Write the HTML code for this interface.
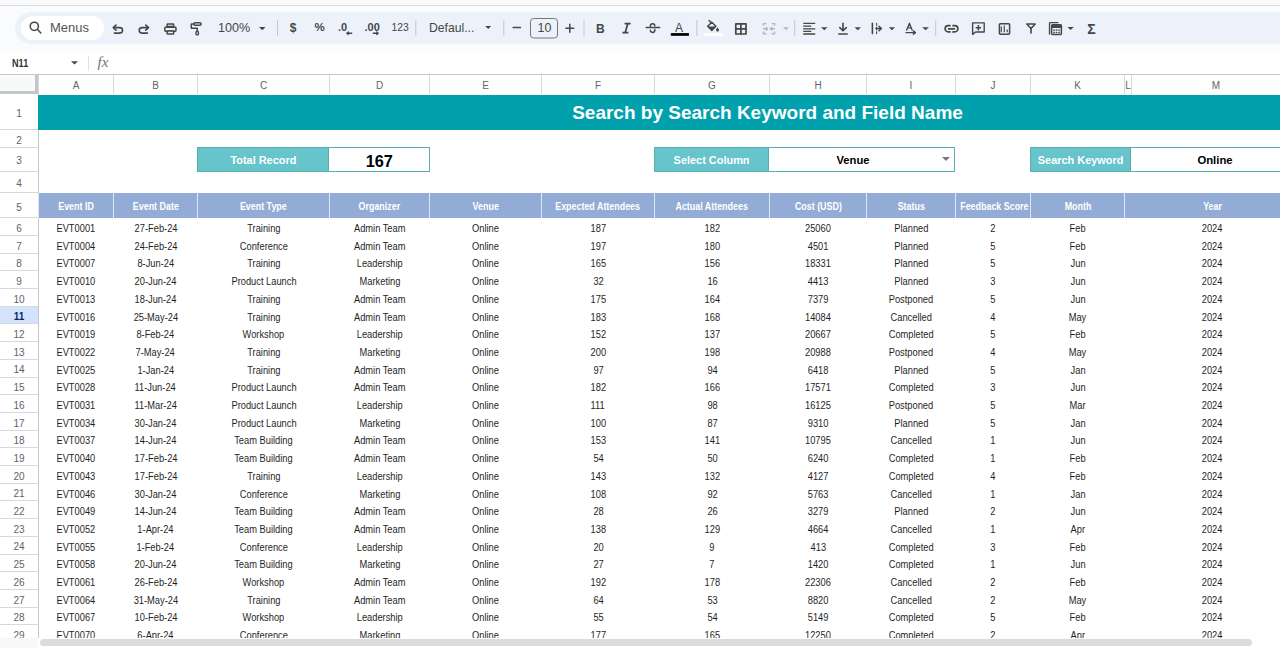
<!DOCTYPE html>
<html><head><meta charset="utf-8">
<style>
*{margin:0;padding:0;box-sizing:border-box}
html,body{width:1280px;height:648px;overflow:hidden;background:#fff;font-family:"Liberation Sans",sans-serif}
.a{position:absolute}
.t{position:absolute;white-space:nowrap;text-align:center}
.ch{position:absolute;top:75px;height:19px;border-left:1px solid #d9d9d9;color:#606368;font-size:10px;line-height:19px;padding-top:1px;text-align:center}
.rh{position:absolute;left:0;width:38px;border-bottom:1px solid #d9d9d9;color:#555;font-size:10px;text-align:center;background:#fff;padding-top:1.5px}
.hd{position:absolute;top:193px;height:25px;background:#92acd5;border-left:1px solid #dde6f3;color:#fff;font-weight:bold;font-size:10px;line-height:25px;padding-top:0.6px;text-align:center;white-space:nowrap}
.dc{position:absolute;font-size:10px;color:#1f1f1f;text-align:center;white-space:nowrap;line-height:17.7px;height:17.7px;padding-top:1.8px}
.dc span,.hd span{display:inline-block;transform:scaleX(.93)}
.hd span{transform:scaleX(.89)}
svg{position:absolute;overflow:visible}
</style></head><body>

<div class="a" style="left:0;top:0;width:1280px;height:5px;background:#f9f8fa"></div>
<div class="a" style="left:0;top:5px;width:1280px;height:1px;background:#dcdcdc"></div>
<div class="a" style="left:0;top:6px;width:1280px;height:45px;background:#f9fbfd"></div>
<div class="a" style="left:15px;top:12px;width:1280px;height:32px;background:#edf2fa;border-radius:16px"></div>
<div class="a" style="left:21px;top:16px;width:83px;height:24px;background:#fff;border-radius:12px"></div>
<div class="t" style="left:50px;top:20px;font-size:13px;color:#555;line-height:16px">Menus</div>
<svg style="left:0;top:0" width="1280" height="51" viewBox="0 0 1280 51">
<g fill="none" stroke="#444746" stroke-width="1.5" stroke-linecap="round" stroke-linejoin="round">
<!-- magnifier -->
<circle cx="34.3" cy="26.3" r="4.1"/>
<path d="M37.3 29.3 L40.8 33"/>
<!-- undo -->
<path d="M113.8 27.6 H119.8 A2.75 2.75 0 0 1 119.8 33.1 H114.4" stroke-width="1.6"/>
<path d="M116 25.1 L113.3 27.6 L116 30.1" stroke-width="1.6"/>
<!-- redo -->
<path d="M148 27.6 H142 A2.75 2.75 0 0 0 142 33.1 H147.4" stroke-width="1.6"/>
<path d="M145.8 25.1 L148.5 27.6 L145.8 30.1" stroke-width="1.6"/>
<!-- print -->
<rect x="167.15" y="24" width="6.5" height="2.6" rx="0.5"/>
<rect x="164.85" y="27.35" width="11.1" height="3.8" rx="0.7"/>
<rect x="167.15" y="30.95" width="6.5" height="3" rx="0.5" fill="#edf2fa"/>
<!-- paint format -->
<rect x="193.95" y="22.85" width="7.1" height="2.3" rx="1.1"/>
<path d="M193.9 24 H191.3 V28.3 H197.3 V30.8"/>
<path d="M197.2 30.9 C196.2 31.5 195.85 32.5 195.85 33.6 A1.35 1.35 0 0 0 198.55 33.6 C198.55 32.5 198.2 31.5 197.2 30.9 Z" stroke-width="1.4"/>
<!-- minus/plus -->
<path d="M513.2 27.6 H520.4"/>
<path d="M565.8 28.2 H573.8 M569.8 24.2 V32.2"/>
<!-- italic -->
<path d="M624.6 23.7 H630.6 M622.4 32.6 H628.4 M627.8 23.7 L625.2 32.6" stroke-width="1.7" stroke-linecap="butt"/>
<!-- strikethrough -->
<path d="M646.2 27.6 H659.6" stroke-width="1.5"/>
<path d="M650.4 26.2 V26.1 A2.2 2.2 0 0 1 654.8 25.8" stroke-width="1.5"/>
<path d="M650.4 30.2 A2.2 2.2 0 0 0 654.8 30.2 V29.6" stroke-width="1.5"/>
<!-- borders -->
<rect x="735.8" y="23.8" width="10.2" height="10.2" stroke-width="1.7"/>
<path d="M740.9 23.8 V34 M735.8 28.9 H746" stroke-width="1.7"/>
<!-- align left -->
<path d="M803.2 23.4 H815.2 M803.2 26.2 H811.2 M803.2 28.9 H815.2 M803.2 31.4 H811.2 M803.2 34 H815.2" stroke-width="1.3" stroke-linecap="butt"/>
<!-- valign bottom -->
<path d="M843 23.2 V30.4 M839.8 27.6 L843 30.8 L846.2 27.6" stroke-width="1.6"/>
<path d="M838.2 34 H847.8" stroke-width="1.5" stroke-linecap="butt"/>
<!-- wrap -->
<path d="M872.4 23.2 V33.6" stroke-width="1.6"/>
<path d="M876.6 23.4 V25.2 M876.6 27 V30 M876.6 31.8 V33.6" stroke-width="1.1"/>
<path d="M876 28.5 H881.2 M879 26.2 L881.4 28.5 L879 30.8" stroke-width="1.5"/>
<!-- rotate A -->
<path d="M906.6 30.2 L909.4 23.2 L912.2 30.2 M907.6 27.8 H911.2" stroke-width="1.3"/>
<path d="M906 32.6 H915.2 M913.4 30.9 L915.4 32.6 L913.4 34.3" stroke-width="1.4"/>
<!-- link -->
<path d="M950 25.7 H948.2 A3.1 3.1 0 0 0 948.2 31.9 H950 M953 25.7 H954.8 A3.1 3.1 0 0 1 954.8 31.9 H953 M948.6 28.8 H954.4" stroke-width="1.7"/>
<!-- comment -->
<path d="M972.6 34.4 V22.9 H984.2 V32 H975.6 Z" stroke-width="1.4"/>
<path d="M978.4 25 V30.4 M975.7 27.7 H981.1" stroke-width="1.5" stroke-linecap="butt"/>
<!-- chart -->
<rect x="999.4" y="23.8" width="10.2" height="10.4" rx="1" stroke-width="1.5"/>
<path d="M1001.3 32.2 V26.6 M1004.3 32.2 V25.6 M1007.2 32.2 V29.6" stroke-width="1.2" stroke-linecap="butt"/>
<!-- filter -->
<path d="M1026.8 24 H1035.2 L1031 28.4 Z" stroke-width="1.5"/>
<path d="M1031 28.4 V33" stroke-width="1.6"/>
<!-- calc -->
<path d="M1049.5 34.2 V23.4 A0.8 0.8 0 0 1 1050.3 22.6 H1058" stroke-width="1.3"/>
<rect x="1051.6" y="24.8" width="9.8" height="9.8" rx="1" stroke-width="1.5"/>
</g>
<g fill="#444746">
<!-- dropdown triangles -->
<path d="M259 27 L265.5 27 L262.25 30.2 Z"/>
<path d="M485.2 26 L491.2 26 L488.2 29 Z"/>
<path d="M821 27.2 L827.6 27.2 L824.3 30.3 Z"/>
<path d="M854.6 27.2 L861 27.2 L857.8 30.3 Z"/>
<path d="M888.8 27.2 L895 27.2 L891.9 30.3 Z"/>
<path d="M922.2 27.2 L928.9 27.2 L925.55 30.3 Z"/>
<path d="M1067.5 27 L1073.8 27 L1070.65 30.1 Z"/>
<path d="M71 61.3 L78 61.3 L74.5 64.6 Z"/>
<!-- . 0 arrows -->
<path d="M345.8 33.2 L348.8 30.9 V32.5 H352.2 V33.9 H348.8 V35.5 Z"/>
<path d="M379.2 33.2 L376.2 30.9 V32.5 H372.8 V33.9 H376.2 V35.5 Z"/>
<!-- paint bucket -->
<path d="M711.8 22.2 L715.9 26.3 L711.8 30.4 L707.7 26.3 Z" fill="none" stroke="#444746" stroke-width="1.5" stroke-linejoin="round"/>
<path d="M707.9 26.5 H715.7 L711.8 30.3 Z"/>
<path d="M709 20.4 L711.4 22.8" stroke="#444746" stroke-width="1.4" stroke-linecap="round"/>
<path d="M717.5 27.4 C718.4 28.5 719 29.2 719 29.9 A1.5 1.5 0 0 1 716 29.9 C716 29.2 716.6 28.5 717.5 27.4 Z"/>
<!-- calc grid dots -->
<rect x="1051.6" y="24.8" width="9.8" height="3.2"/>
<rect x="1053.2" y="29.4" width="1.6" height="1.4"/><rect x="1055.7" y="29.4" width="1.6" height="1.4"/><rect x="1058.2" y="29.4" width="1.6" height="1.4"/>
<rect x="1053.2" y="31.8" width="1.6" height="1.4"/><rect x="1055.7" y="31.8" width="1.6" height="1.4"/><rect x="1058.2" y="31.8" width="1.6" height="1.4"/>
</g>
<!-- A color bar -->
<rect x="670.8" y="33.1" width="18.2" height="2.7" fill="#000"/>
<rect x="703.7" y="33.3" width="19.3" height="2.5" fill="#fff"/>
<!-- merge (disabled) -->
<g fill="none" stroke="#b5b8bc" stroke-width="1.4">
<path d="M763.4 25.8 V23.6 H766.4 M763.4 31.6 V33.8 H766.4 M774.6 25.8 V23.6 H771.6 M774.6 31.6 V33.8 H771.6"/>
<path d="M763 28.7 H767.6 M765.8 26.9 L767.6 28.7 L765.8 30.5 M775 28.7 H770.4 M772.2 26.9 L770.4 28.7 L772.2 30.5"/>
</g>
<path d="M783 27.2 L789 27.2 L786 30.2 Z" fill="#b5b8bc"/>
<!-- separators -->
<g fill="#c7c7c7">
<rect x="277" y="20.2" width="1" height="15.8"/>
<rect x="415.3" y="20.2" width="1" height="15.8"/>
<rect x="503.3" y="20.2" width="1" height="15.8"/>
<rect x="583.5" y="20.2" width="1" height="15.8"/>
<rect x="696.3" y="20.2" width="1" height="15.8"/>
<rect x="794.2" y="20.2" width="1" height="15.8"/>
<rect x="935.2" y="20.2" width="1" height="15.8"/>
</g>
<!-- font size box -->
<rect x="530.5" y="18.5" width="27" height="19.5" rx="3" fill="none" stroke="#747775" stroke-width="1"/>
</svg>

<div class="t" style="left:218px;top:21.3px;font-size:12.6px;font-weight:normal;font-style:normal;color:#444746;font-family:"Liberation Sans",sans-serif;line-height:14.6px;letter-spacing:0px;text-align:left">100%</div>
<div class="t" style="left:289.8px;top:20.5px;font-size:12px;font-weight:600;font-style:normal;color:#444746;font-family:"Liberation Sans",sans-serif;line-height:14px;letter-spacing:0px;text-align:left">$</div>
<div class="t" style="left:314.5px;top:20.5px;font-size:11.5px;font-weight:bold;font-style:normal;color:#444746;font-family:"Liberation Sans",sans-serif;line-height:13.5px;letter-spacing:0px;text-align:left">%</div>
<div class="t" style="left:338px;top:20.5px;font-size:11px;font-weight:bold;font-style:normal;color:#444746;font-family:"Liberation Sans",sans-serif;line-height:13px;letter-spacing:0px;text-align:left">.0</div>
<div class="t" style="left:364.5px;top:20.5px;font-size:11px;font-weight:bold;font-style:normal;color:#444746;font-family:"Liberation Sans",sans-serif;line-height:13px;letter-spacing:0px;text-align:left">.00</div>
<div class="t" style="left:391.5px;top:22px;font-size:10.3px;font-weight:normal;font-style:normal;color:#444746;font-family:"Liberation Sans",sans-serif;line-height:12.3px;letter-spacing:0px;text-align:left">123</div>
<div class="t" style="left:429px;top:21px;font-size:12.2px;font-weight:normal;font-style:normal;color:#444746;font-family:"Liberation Sans",sans-serif;line-height:14.2px;letter-spacing:0px;text-align:left">Defaul...</div>
<div class="t" style="left:537.5px;top:21px;font-size:12.5px;font-weight:normal;font-style:normal;color:#444746;font-family:"Liberation Sans",sans-serif;line-height:14.5px;letter-spacing:0px;text-align:left">10</div>
<div class="t" style="left:596px;top:21.5px;font-size:12px;font-weight:bold;font-style:normal;color:#444746;font-family:"Liberation Sans",sans-serif;line-height:14px;letter-spacing:0px;text-align:left">B</div>
<div class="t" style="left:675px;top:20.5px;font-size:12px;font-weight:normal;font-style:normal;color:#444746;font-family:"Liberation Sans",sans-serif;line-height:14px;letter-spacing:0px;text-align:left">A</div>
<div class="t" style="left:1087.3px;top:20.6px;font-size:14px;font-weight:bold;font-style:normal;color:#444746;font-family:"Liberation Sans",sans-serif;line-height:16px;letter-spacing:0px;text-align:left">&Sigma;</div>
<div class="a" style="left:0;top:51px;width:1280px;height:23px;background:#fff"></div>
<div class="t" style="left:11.6px;top:56.5px;font-size:10.6px;font-weight:bold;color:#333;line-height:12px;transform:scaleX(.86);transform-origin:0 0">N11</div>
<svg style="left:0;top:0" width="100" height="80"><path d="M71 61.3 L78 61.3 L74.5 64.6 Z" fill="#444746"/></svg>
<div class="a" style="left:88px;top:56px;width:1px;height:15px;background:#e0e0e0"></div>
<div class="t" style="left:97.5px;top:54.5px;font-size:15px;color:#6f7378;font-family:'Liberation Serif',serif;font-style:italic;line-height:14px">fx</div>
<div class="a" style="left:0;top:74px;width:1280px;height:1px;background:#c7c7c7"></div>
<div class="a" style="left:0;top:75px;width:1280px;height:19px;background:#fff"></div>
<div class="a" style="left:0;top:75px;width:38px;height:19px;background:#f8f9fa;border-right:3px solid #c4c7c5;border-bottom:3px solid #c4c7c5"></div>
<div class="ch" style="left:38px;width:75px">A</div>
<div class="ch" style="left:113px;width:84px">B</div>
<div class="ch" style="left:197px;width:132px">C</div>
<div class="ch" style="left:329px;width:100px">D</div>
<div class="ch" style="left:429px;width:112px">E</div>
<div class="ch" style="left:541px;width:113px">F</div>
<div class="ch" style="left:654px;width:115px">G</div>
<div class="ch" style="left:769px;width:97px">H</div>
<div class="ch" style="left:866px;width:89px">I</div>
<div class="ch" style="left:955px;width:75px">J</div>
<div class="ch" style="left:1030px;width:94px">K</div>
<div class="ch" style="left:1124px;width:7px">L</div>
<div class="ch" style="left:1131px;width:169px">M</div>
<div class="rh" style="top:94px;height:36px;line-height:36px;background:#fff;color:#606368;font-weight:normal;padding-top:-0.5px">1</div>
<div class="rh" style="top:130px;height:17.5px;line-height:17.5px;background:#fff;color:#606368;font-weight:normal;padding-top:-0.5px">2</div>
<div class="rh" style="top:147.5px;height:24.0px;line-height:24.0px;background:#fff;color:#606368;font-weight:normal;padding-top:-0.5px">3</div>
<div class="rh" style="top:171.5px;height:21.5px;line-height:21.5px;background:#fff;color:#606368;font-weight:normal;padding-top:-0.5px">4</div>
<div class="rh" style="top:193px;height:25.30000000000001px;line-height:25.30000000000001px;background:#fff;color:#606368;font-weight:normal;padding-top:-0.5px">5</div>
<div class="rh" style="top:218.3px;height:17.69999999999999px;line-height:17.69999999999999px;background:#fff;color:#606368;font-weight:normal;padding-top:1.5px">6</div>
<div class="rh" style="top:236.0px;height:17.700000000000017px;line-height:17.700000000000017px;background:#fff;color:#606368;font-weight:normal;padding-top:1.5px">7</div>
<div class="rh" style="top:253.70000000000002px;height:17.69999999999996px;line-height:17.69999999999996px;background:#fff;color:#606368;font-weight:normal;padding-top:1.5px">8</div>
<div class="rh" style="top:271.4px;height:17.700000000000045px;line-height:17.700000000000045px;background:#fff;color:#606368;font-weight:normal;padding-top:1.5px">9</div>
<div class="rh" style="top:289.1px;height:17.69999999999999px;line-height:17.69999999999999px;background:#fff;color:#606368;font-weight:normal;padding-top:1.5px">10</div>
<div class="rh" style="top:306.8px;height:17.69999999999999px;line-height:17.69999999999999px;background:#d3e3fd;color:#0b2a5c;font-weight:bold;padding-top:1.5px">11</div>
<div class="rh" style="top:324.5px;height:17.69999999999999px;line-height:17.69999999999999px;background:#fff;color:#606368;font-weight:normal;padding-top:1.5px">12</div>
<div class="rh" style="top:342.2px;height:17.69999999999999px;line-height:17.69999999999999px;background:#fff;color:#606368;font-weight:normal;padding-top:1.5px">13</div>
<div class="rh" style="top:359.9px;height:17.700000000000045px;line-height:17.700000000000045px;background:#fff;color:#606368;font-weight:normal;padding-top:1.5px">14</div>
<div class="rh" style="top:377.6px;height:17.69999999999999px;line-height:17.69999999999999px;background:#fff;color:#606368;font-weight:normal;padding-top:1.5px">15</div>
<div class="rh" style="top:395.3px;height:17.69999999999999px;line-height:17.69999999999999px;background:#fff;color:#606368;font-weight:normal;padding-top:1.5px">16</div>
<div class="rh" style="top:413.0px;height:17.69999999999999px;line-height:17.69999999999999px;background:#fff;color:#606368;font-weight:normal;padding-top:1.5px">17</div>
<div class="rh" style="top:430.7px;height:17.69999999999999px;line-height:17.69999999999999px;background:#fff;color:#606368;font-weight:normal;padding-top:1.5px">18</div>
<div class="rh" style="top:448.4px;height:17.700000000000045px;line-height:17.700000000000045px;background:#fff;color:#606368;font-weight:normal;padding-top:1.5px">19</div>
<div class="rh" style="top:466.1px;height:17.69999999999999px;line-height:17.69999999999999px;background:#fff;color:#606368;font-weight:normal;padding-top:1.5px">20</div>
<div class="rh" style="top:483.8px;height:17.69999999999999px;line-height:17.69999999999999px;background:#fff;color:#606368;font-weight:normal;padding-top:1.5px">21</div>
<div class="rh" style="top:501.5px;height:17.700000000000045px;line-height:17.700000000000045px;background:#fff;color:#606368;font-weight:normal;padding-top:1.5px">22</div>
<div class="rh" style="top:519.2px;height:17.699999999999932px;line-height:17.699999999999932px;background:#fff;color:#606368;font-weight:normal;padding-top:1.5px">23</div>
<div class="rh" style="top:536.9px;height:17.700000000000045px;line-height:17.700000000000045px;background:#fff;color:#606368;font-weight:normal;padding-top:1.5px">24</div>
<div class="rh" style="top:554.6px;height:17.699999999999932px;line-height:17.699999999999932px;background:#fff;color:#606368;font-weight:normal;padding-top:1.5px">25</div>
<div class="rh" style="top:572.3px;height:17.700000000000045px;line-height:17.700000000000045px;background:#fff;color:#606368;font-weight:normal;padding-top:1.5px">26</div>
<div class="rh" style="top:590.0px;height:17.700000000000045px;line-height:17.700000000000045px;background:#fff;color:#606368;font-weight:normal;padding-top:1.5px">27</div>
<div class="rh" style="top:607.7px;height:17.699999999999932px;line-height:17.699999999999932px;background:#fff;color:#606368;font-weight:normal;padding-top:1.5px">28</div>
<div class="rh" style="top:625.4px;height:17.699999999999932px;line-height:17.699999999999932px;background:#fff;color:#606368;font-weight:normal;padding-top:1.5px">29</div>
<div class="a" style="left:38px;top:94px;width:1px;height:544px;background:#c7c7c7"></div>
<div class="a" style="left:38px;top:95px;width:1242px;height:35px;background:#00a1ad"></div>
<div class="t" style="left:572px;top:102px;width:391px;font-size:19px;font-weight:bold;color:#fff;line-height:22px">Search by Search Keyword and Field Name</div>
<div class="a" style="left:197px;top:147px;width:132px;height:25px;background:#66c4ca;border:1px solid #5aaeb3"></div><div class="t" style="left:197px;top:147px;width:132px;height:25px;line-height:25px;font-size:11.4px;font-weight:bold;color:#fff;padding-top:0.5px"><span style="display:inline-block;transform:scaleX(.96)">Total Record</span></div><div class="a" style="left:329px;top:147px;width:100.5px;height:25px;background:#fff;border:1px solid #5aaeb3;border-left:none"></div><div class="t" style="left:329px;top:147px;width:100.5px;height:25px;line-height:25px;font-size:16.3px;font-weight:bold;color:#000;padding-top:1.5px">167</div>
<div class="a" style="left:654px;top:147px;width:115px;height:25px;background:#66c4ca;border:1px solid #5aaeb3"></div><div class="t" style="left:654px;top:147px;width:115px;height:25px;line-height:25px;font-size:11.4px;font-weight:bold;color:#fff;padding-top:0.5px"><span style="display:inline-block;transform:scaleX(.96)">Select Column</span></div><div class="a" style="left:769px;top:147px;width:186px;height:25px;background:#fff;border:1px solid #5aaeb3;border-left:none"></div><div class="t" style="left:769px;top:147px;width:168px;height:25px;line-height:25px;font-size:11.2px;font-weight:bold;color:#000;padding-top:0.5px">Venue</div>
<div class="a" style="left:942px;top:157px;width:0;height:0;border-left:4px solid transparent;border-right:4px solid transparent;border-top:4px solid #777"></div>
<div class="a" style="left:1030px;top:147px;width:101px;height:25px;background:#66c4ca;border:1px solid #5aaeb3"></div><div class="t" style="left:1030px;top:147px;width:101px;height:25px;line-height:25px;font-size:11.4px;font-weight:bold;color:#fff;padding-top:0.5px"><span style="display:inline-block;transform:scaleX(.96)">Search Keyword</span></div><div class="a" style="left:1131px;top:147px;width:168px;height:25px;background:#fff;border:1px solid #5aaeb3;border-left:none"></div><div class="t" style="left:1131px;top:147px;width:168px;height:25px;line-height:25px;font-size:11.3px;font-weight:bold;color:#000;padding-top:0.5px">Online</div>
<div class="hd" style="left:38px;width:75px"><span>Event ID</span></div>
<div class="hd" style="left:113px;width:84px"><span>Event Date</span></div>
<div class="hd" style="left:197px;width:132px"><span>Event Type</span></div>
<div class="hd" style="left:329px;width:100px"><span>Organizer</span></div>
<div class="hd" style="left:429px;width:112px"><span>Venue</span></div>
<div class="hd" style="left:541px;width:113px"><span>Expected Attendees</span></div>
<div class="hd" style="left:654px;width:115px"><span>Actual Attendees</span></div>
<div class="hd" style="left:769px;width:97px"><span>Cost (USD)</span></div>
<div class="hd" style="left:866px;width:89px"><span>Status</span></div>
<div class="hd" style="left:955px;width:75px"><span>Feedback Score</span></div>
<div class="hd" style="left:1030px;width:94px"><span>Month</span></div>
<div class="hd" style="left:1124px;width:176px"><span>Year</span></div>
<div class="dc" style="left:38.6px;top:218.3px;width:75px"><span>EVT0001</span></div>
<div class="dc" style="left:113.6px;top:218.3px;width:84px"><span>27-Feb-24</span></div>
<div class="dc" style="left:197.6px;top:218.3px;width:132px"><span>Training</span></div>
<div class="dc" style="left:329.6px;top:218.3px;width:100px"><span>Admin Team</span></div>
<div class="dc" style="left:429.6px;top:218.3px;width:112px"><span>Online</span></div>
<div class="dc" style="left:541.6px;top:218.3px;width:113px"><span>187</span></div>
<div class="dc" style="left:654.6px;top:218.3px;width:115px"><span>182</span></div>
<div class="dc" style="left:769.6px;top:218.3px;width:97px"><span>25060</span></div>
<div class="dc" style="left:866.6px;top:218.3px;width:89px"><span>Planned</span></div>
<div class="dc" style="left:955.6px;top:218.3px;width:75px"><span>2</span></div>
<div class="dc" style="left:1030.6px;top:218.3px;width:94px"><span>Feb</span></div>
<div class="dc" style="left:1124.6px;top:218.3px;width:176px"><span>2024</span></div>
<div class="dc" style="left:38.6px;top:236.0px;width:75px"><span>EVT0004</span></div>
<div class="dc" style="left:113.6px;top:236.0px;width:84px"><span>24-Feb-24</span></div>
<div class="dc" style="left:197.6px;top:236.0px;width:132px"><span>Conference</span></div>
<div class="dc" style="left:329.6px;top:236.0px;width:100px"><span>Admin Team</span></div>
<div class="dc" style="left:429.6px;top:236.0px;width:112px"><span>Online</span></div>
<div class="dc" style="left:541.6px;top:236.0px;width:113px"><span>197</span></div>
<div class="dc" style="left:654.6px;top:236.0px;width:115px"><span>180</span></div>
<div class="dc" style="left:769.6px;top:236.0px;width:97px"><span>4501</span></div>
<div class="dc" style="left:866.6px;top:236.0px;width:89px"><span>Planned</span></div>
<div class="dc" style="left:955.6px;top:236.0px;width:75px"><span>5</span></div>
<div class="dc" style="left:1030.6px;top:236.0px;width:94px"><span>Feb</span></div>
<div class="dc" style="left:1124.6px;top:236.0px;width:176px"><span>2024</span></div>
<div class="dc" style="left:38.6px;top:253.7px;width:75px"><span>EVT0007</span></div>
<div class="dc" style="left:113.6px;top:253.7px;width:84px"><span>8-Jun-24</span></div>
<div class="dc" style="left:197.6px;top:253.7px;width:132px"><span>Training</span></div>
<div class="dc" style="left:329.6px;top:253.7px;width:100px"><span>Leadership</span></div>
<div class="dc" style="left:429.6px;top:253.7px;width:112px"><span>Online</span></div>
<div class="dc" style="left:541.6px;top:253.7px;width:113px"><span>165</span></div>
<div class="dc" style="left:654.6px;top:253.7px;width:115px"><span>156</span></div>
<div class="dc" style="left:769.6px;top:253.7px;width:97px"><span>18331</span></div>
<div class="dc" style="left:866.6px;top:253.7px;width:89px"><span>Planned</span></div>
<div class="dc" style="left:955.6px;top:253.7px;width:75px"><span>5</span></div>
<div class="dc" style="left:1030.6px;top:253.7px;width:94px"><span>Jun</span></div>
<div class="dc" style="left:1124.6px;top:253.7px;width:176px"><span>2024</span></div>
<div class="dc" style="left:38.6px;top:271.4px;width:75px"><span>EVT0010</span></div>
<div class="dc" style="left:113.6px;top:271.4px;width:84px"><span>20-Jun-24</span></div>
<div class="dc" style="left:197.6px;top:271.4px;width:132px"><span>Product Launch</span></div>
<div class="dc" style="left:329.6px;top:271.4px;width:100px"><span>Marketing</span></div>
<div class="dc" style="left:429.6px;top:271.4px;width:112px"><span>Online</span></div>
<div class="dc" style="left:541.6px;top:271.4px;width:113px"><span>32</span></div>
<div class="dc" style="left:654.6px;top:271.4px;width:115px"><span>16</span></div>
<div class="dc" style="left:769.6px;top:271.4px;width:97px"><span>4413</span></div>
<div class="dc" style="left:866.6px;top:271.4px;width:89px"><span>Planned</span></div>
<div class="dc" style="left:955.6px;top:271.4px;width:75px"><span>3</span></div>
<div class="dc" style="left:1030.6px;top:271.4px;width:94px"><span>Jun</span></div>
<div class="dc" style="left:1124.6px;top:271.4px;width:176px"><span>2024</span></div>
<div class="dc" style="left:38.6px;top:289.1px;width:75px"><span>EVT0013</span></div>
<div class="dc" style="left:113.6px;top:289.1px;width:84px"><span>18-Jun-24</span></div>
<div class="dc" style="left:197.6px;top:289.1px;width:132px"><span>Training</span></div>
<div class="dc" style="left:329.6px;top:289.1px;width:100px"><span>Admin Team</span></div>
<div class="dc" style="left:429.6px;top:289.1px;width:112px"><span>Online</span></div>
<div class="dc" style="left:541.6px;top:289.1px;width:113px"><span>175</span></div>
<div class="dc" style="left:654.6px;top:289.1px;width:115px"><span>164</span></div>
<div class="dc" style="left:769.6px;top:289.1px;width:97px"><span>7379</span></div>
<div class="dc" style="left:866.6px;top:289.1px;width:89px"><span>Postponed</span></div>
<div class="dc" style="left:955.6px;top:289.1px;width:75px"><span>5</span></div>
<div class="dc" style="left:1030.6px;top:289.1px;width:94px"><span>Jun</span></div>
<div class="dc" style="left:1124.6px;top:289.1px;width:176px"><span>2024</span></div>
<div class="dc" style="left:38.6px;top:306.8px;width:75px"><span>EVT0016</span></div>
<div class="dc" style="left:113.6px;top:306.8px;width:84px"><span>25-May-24</span></div>
<div class="dc" style="left:197.6px;top:306.8px;width:132px"><span>Training</span></div>
<div class="dc" style="left:329.6px;top:306.8px;width:100px"><span>Admin Team</span></div>
<div class="dc" style="left:429.6px;top:306.8px;width:112px"><span>Online</span></div>
<div class="dc" style="left:541.6px;top:306.8px;width:113px"><span>183</span></div>
<div class="dc" style="left:654.6px;top:306.8px;width:115px"><span>168</span></div>
<div class="dc" style="left:769.6px;top:306.8px;width:97px"><span>14084</span></div>
<div class="dc" style="left:866.6px;top:306.8px;width:89px"><span>Cancelled</span></div>
<div class="dc" style="left:955.6px;top:306.8px;width:75px"><span>4</span></div>
<div class="dc" style="left:1030.6px;top:306.8px;width:94px"><span>May</span></div>
<div class="dc" style="left:1124.6px;top:306.8px;width:176px"><span>2024</span></div>
<div class="dc" style="left:38.6px;top:324.5px;width:75px"><span>EVT0019</span></div>
<div class="dc" style="left:113.6px;top:324.5px;width:84px"><span>8-Feb-24</span></div>
<div class="dc" style="left:197.6px;top:324.5px;width:132px"><span>Workshop</span></div>
<div class="dc" style="left:329.6px;top:324.5px;width:100px"><span>Leadership</span></div>
<div class="dc" style="left:429.6px;top:324.5px;width:112px"><span>Online</span></div>
<div class="dc" style="left:541.6px;top:324.5px;width:113px"><span>152</span></div>
<div class="dc" style="left:654.6px;top:324.5px;width:115px"><span>137</span></div>
<div class="dc" style="left:769.6px;top:324.5px;width:97px"><span>20667</span></div>
<div class="dc" style="left:866.6px;top:324.5px;width:89px"><span>Completed</span></div>
<div class="dc" style="left:955.6px;top:324.5px;width:75px"><span>5</span></div>
<div class="dc" style="left:1030.6px;top:324.5px;width:94px"><span>Feb</span></div>
<div class="dc" style="left:1124.6px;top:324.5px;width:176px"><span>2024</span></div>
<div class="dc" style="left:38.6px;top:342.2px;width:75px"><span>EVT0022</span></div>
<div class="dc" style="left:113.6px;top:342.2px;width:84px"><span>7-May-24</span></div>
<div class="dc" style="left:197.6px;top:342.2px;width:132px"><span>Training</span></div>
<div class="dc" style="left:329.6px;top:342.2px;width:100px"><span>Marketing</span></div>
<div class="dc" style="left:429.6px;top:342.2px;width:112px"><span>Online</span></div>
<div class="dc" style="left:541.6px;top:342.2px;width:113px"><span>200</span></div>
<div class="dc" style="left:654.6px;top:342.2px;width:115px"><span>198</span></div>
<div class="dc" style="left:769.6px;top:342.2px;width:97px"><span>20988</span></div>
<div class="dc" style="left:866.6px;top:342.2px;width:89px"><span>Postponed</span></div>
<div class="dc" style="left:955.6px;top:342.2px;width:75px"><span>4</span></div>
<div class="dc" style="left:1030.6px;top:342.2px;width:94px"><span>May</span></div>
<div class="dc" style="left:1124.6px;top:342.2px;width:176px"><span>2024</span></div>
<div class="dc" style="left:38.6px;top:359.9px;width:75px"><span>EVT0025</span></div>
<div class="dc" style="left:113.6px;top:359.9px;width:84px"><span>1-Jan-24</span></div>
<div class="dc" style="left:197.6px;top:359.9px;width:132px"><span>Training</span></div>
<div class="dc" style="left:329.6px;top:359.9px;width:100px"><span>Admin Team</span></div>
<div class="dc" style="left:429.6px;top:359.9px;width:112px"><span>Online</span></div>
<div class="dc" style="left:541.6px;top:359.9px;width:113px"><span>97</span></div>
<div class="dc" style="left:654.6px;top:359.9px;width:115px"><span>94</span></div>
<div class="dc" style="left:769.6px;top:359.9px;width:97px"><span>6418</span></div>
<div class="dc" style="left:866.6px;top:359.9px;width:89px"><span>Planned</span></div>
<div class="dc" style="left:955.6px;top:359.9px;width:75px"><span>5</span></div>
<div class="dc" style="left:1030.6px;top:359.9px;width:94px"><span>Jan</span></div>
<div class="dc" style="left:1124.6px;top:359.9px;width:176px"><span>2024</span></div>
<div class="dc" style="left:38.6px;top:377.6px;width:75px"><span>EVT0028</span></div>
<div class="dc" style="left:113.6px;top:377.6px;width:84px"><span>11-Jun-24</span></div>
<div class="dc" style="left:197.6px;top:377.6px;width:132px"><span>Product Launch</span></div>
<div class="dc" style="left:329.6px;top:377.6px;width:100px"><span>Admin Team</span></div>
<div class="dc" style="left:429.6px;top:377.6px;width:112px"><span>Online</span></div>
<div class="dc" style="left:541.6px;top:377.6px;width:113px"><span>182</span></div>
<div class="dc" style="left:654.6px;top:377.6px;width:115px"><span>166</span></div>
<div class="dc" style="left:769.6px;top:377.6px;width:97px"><span>17571</span></div>
<div class="dc" style="left:866.6px;top:377.6px;width:89px"><span>Completed</span></div>
<div class="dc" style="left:955.6px;top:377.6px;width:75px"><span>3</span></div>
<div class="dc" style="left:1030.6px;top:377.6px;width:94px"><span>Jun</span></div>
<div class="dc" style="left:1124.6px;top:377.6px;width:176px"><span>2024</span></div>
<div class="dc" style="left:38.6px;top:395.3px;width:75px"><span>EVT0031</span></div>
<div class="dc" style="left:113.6px;top:395.3px;width:84px"><span>11-Mar-24</span></div>
<div class="dc" style="left:197.6px;top:395.3px;width:132px"><span>Product Launch</span></div>
<div class="dc" style="left:329.6px;top:395.3px;width:100px"><span>Leadership</span></div>
<div class="dc" style="left:429.6px;top:395.3px;width:112px"><span>Online</span></div>
<div class="dc" style="left:541.6px;top:395.3px;width:113px"><span>111</span></div>
<div class="dc" style="left:654.6px;top:395.3px;width:115px"><span>98</span></div>
<div class="dc" style="left:769.6px;top:395.3px;width:97px"><span>16125</span></div>
<div class="dc" style="left:866.6px;top:395.3px;width:89px"><span>Postponed</span></div>
<div class="dc" style="left:955.6px;top:395.3px;width:75px"><span>5</span></div>
<div class="dc" style="left:1030.6px;top:395.3px;width:94px"><span>Mar</span></div>
<div class="dc" style="left:1124.6px;top:395.3px;width:176px"><span>2024</span></div>
<div class="dc" style="left:38.6px;top:413.0px;width:75px"><span>EVT0034</span></div>
<div class="dc" style="left:113.6px;top:413.0px;width:84px"><span>30-Jan-24</span></div>
<div class="dc" style="left:197.6px;top:413.0px;width:132px"><span>Product Launch</span></div>
<div class="dc" style="left:329.6px;top:413.0px;width:100px"><span>Marketing</span></div>
<div class="dc" style="left:429.6px;top:413.0px;width:112px"><span>Online</span></div>
<div class="dc" style="left:541.6px;top:413.0px;width:113px"><span>100</span></div>
<div class="dc" style="left:654.6px;top:413.0px;width:115px"><span>87</span></div>
<div class="dc" style="left:769.6px;top:413.0px;width:97px"><span>9310</span></div>
<div class="dc" style="left:866.6px;top:413.0px;width:89px"><span>Planned</span></div>
<div class="dc" style="left:955.6px;top:413.0px;width:75px"><span>5</span></div>
<div class="dc" style="left:1030.6px;top:413.0px;width:94px"><span>Jan</span></div>
<div class="dc" style="left:1124.6px;top:413.0px;width:176px"><span>2024</span></div>
<div class="dc" style="left:38.6px;top:430.7px;width:75px"><span>EVT0037</span></div>
<div class="dc" style="left:113.6px;top:430.7px;width:84px"><span>14-Jun-24</span></div>
<div class="dc" style="left:197.6px;top:430.7px;width:132px"><span>Team Building</span></div>
<div class="dc" style="left:329.6px;top:430.7px;width:100px"><span>Admin Team</span></div>
<div class="dc" style="left:429.6px;top:430.7px;width:112px"><span>Online</span></div>
<div class="dc" style="left:541.6px;top:430.7px;width:113px"><span>153</span></div>
<div class="dc" style="left:654.6px;top:430.7px;width:115px"><span>141</span></div>
<div class="dc" style="left:769.6px;top:430.7px;width:97px"><span>10795</span></div>
<div class="dc" style="left:866.6px;top:430.7px;width:89px"><span>Cancelled</span></div>
<div class="dc" style="left:955.6px;top:430.7px;width:75px"><span>1</span></div>
<div class="dc" style="left:1030.6px;top:430.7px;width:94px"><span>Jun</span></div>
<div class="dc" style="left:1124.6px;top:430.7px;width:176px"><span>2024</span></div>
<div class="dc" style="left:38.6px;top:448.4px;width:75px"><span>EVT0040</span></div>
<div class="dc" style="left:113.6px;top:448.4px;width:84px"><span>17-Feb-24</span></div>
<div class="dc" style="left:197.6px;top:448.4px;width:132px"><span>Team Building</span></div>
<div class="dc" style="left:329.6px;top:448.4px;width:100px"><span>Admin Team</span></div>
<div class="dc" style="left:429.6px;top:448.4px;width:112px"><span>Online</span></div>
<div class="dc" style="left:541.6px;top:448.4px;width:113px"><span>54</span></div>
<div class="dc" style="left:654.6px;top:448.4px;width:115px"><span>50</span></div>
<div class="dc" style="left:769.6px;top:448.4px;width:97px"><span>6240</span></div>
<div class="dc" style="left:866.6px;top:448.4px;width:89px"><span>Completed</span></div>
<div class="dc" style="left:955.6px;top:448.4px;width:75px"><span>1</span></div>
<div class="dc" style="left:1030.6px;top:448.4px;width:94px"><span>Feb</span></div>
<div class="dc" style="left:1124.6px;top:448.4px;width:176px"><span>2024</span></div>
<div class="dc" style="left:38.6px;top:466.1px;width:75px"><span>EVT0043</span></div>
<div class="dc" style="left:113.6px;top:466.1px;width:84px"><span>17-Feb-24</span></div>
<div class="dc" style="left:197.6px;top:466.1px;width:132px"><span>Training</span></div>
<div class="dc" style="left:329.6px;top:466.1px;width:100px"><span>Leadership</span></div>
<div class="dc" style="left:429.6px;top:466.1px;width:112px"><span>Online</span></div>
<div class="dc" style="left:541.6px;top:466.1px;width:113px"><span>143</span></div>
<div class="dc" style="left:654.6px;top:466.1px;width:115px"><span>132</span></div>
<div class="dc" style="left:769.6px;top:466.1px;width:97px"><span>4127</span></div>
<div class="dc" style="left:866.6px;top:466.1px;width:89px"><span>Completed</span></div>
<div class="dc" style="left:955.6px;top:466.1px;width:75px"><span>4</span></div>
<div class="dc" style="left:1030.6px;top:466.1px;width:94px"><span>Feb</span></div>
<div class="dc" style="left:1124.6px;top:466.1px;width:176px"><span>2024</span></div>
<div class="dc" style="left:38.6px;top:483.8px;width:75px"><span>EVT0046</span></div>
<div class="dc" style="left:113.6px;top:483.8px;width:84px"><span>30-Jan-24</span></div>
<div class="dc" style="left:197.6px;top:483.8px;width:132px"><span>Conference</span></div>
<div class="dc" style="left:329.6px;top:483.8px;width:100px"><span>Marketing</span></div>
<div class="dc" style="left:429.6px;top:483.8px;width:112px"><span>Online</span></div>
<div class="dc" style="left:541.6px;top:483.8px;width:113px"><span>108</span></div>
<div class="dc" style="left:654.6px;top:483.8px;width:115px"><span>92</span></div>
<div class="dc" style="left:769.6px;top:483.8px;width:97px"><span>5763</span></div>
<div class="dc" style="left:866.6px;top:483.8px;width:89px"><span>Cancelled</span></div>
<div class="dc" style="left:955.6px;top:483.8px;width:75px"><span>1</span></div>
<div class="dc" style="left:1030.6px;top:483.8px;width:94px"><span>Jan</span></div>
<div class="dc" style="left:1124.6px;top:483.8px;width:176px"><span>2024</span></div>
<div class="dc" style="left:38.6px;top:501.5px;width:75px"><span>EVT0049</span></div>
<div class="dc" style="left:113.6px;top:501.5px;width:84px"><span>14-Jun-24</span></div>
<div class="dc" style="left:197.6px;top:501.5px;width:132px"><span>Team Building</span></div>
<div class="dc" style="left:329.6px;top:501.5px;width:100px"><span>Admin Team</span></div>
<div class="dc" style="left:429.6px;top:501.5px;width:112px"><span>Online</span></div>
<div class="dc" style="left:541.6px;top:501.5px;width:113px"><span>28</span></div>
<div class="dc" style="left:654.6px;top:501.5px;width:115px"><span>26</span></div>
<div class="dc" style="left:769.6px;top:501.5px;width:97px"><span>3279</span></div>
<div class="dc" style="left:866.6px;top:501.5px;width:89px"><span>Planned</span></div>
<div class="dc" style="left:955.6px;top:501.5px;width:75px"><span>2</span></div>
<div class="dc" style="left:1030.6px;top:501.5px;width:94px"><span>Jun</span></div>
<div class="dc" style="left:1124.6px;top:501.5px;width:176px"><span>2024</span></div>
<div class="dc" style="left:38.6px;top:519.2px;width:75px"><span>EVT0052</span></div>
<div class="dc" style="left:113.6px;top:519.2px;width:84px"><span>1-Apr-24</span></div>
<div class="dc" style="left:197.6px;top:519.2px;width:132px"><span>Team Building</span></div>
<div class="dc" style="left:329.6px;top:519.2px;width:100px"><span>Admin Team</span></div>
<div class="dc" style="left:429.6px;top:519.2px;width:112px"><span>Online</span></div>
<div class="dc" style="left:541.6px;top:519.2px;width:113px"><span>138</span></div>
<div class="dc" style="left:654.6px;top:519.2px;width:115px"><span>129</span></div>
<div class="dc" style="left:769.6px;top:519.2px;width:97px"><span>4664</span></div>
<div class="dc" style="left:866.6px;top:519.2px;width:89px"><span>Cancelled</span></div>
<div class="dc" style="left:955.6px;top:519.2px;width:75px"><span>1</span></div>
<div class="dc" style="left:1030.6px;top:519.2px;width:94px"><span>Apr</span></div>
<div class="dc" style="left:1124.6px;top:519.2px;width:176px"><span>2024</span></div>
<div class="dc" style="left:38.6px;top:536.9px;width:75px"><span>EVT0055</span></div>
<div class="dc" style="left:113.6px;top:536.9px;width:84px"><span>1-Feb-24</span></div>
<div class="dc" style="left:197.6px;top:536.9px;width:132px"><span>Conference</span></div>
<div class="dc" style="left:329.6px;top:536.9px;width:100px"><span>Leadership</span></div>
<div class="dc" style="left:429.6px;top:536.9px;width:112px"><span>Online</span></div>
<div class="dc" style="left:541.6px;top:536.9px;width:113px"><span>20</span></div>
<div class="dc" style="left:654.6px;top:536.9px;width:115px"><span>9</span></div>
<div class="dc" style="left:769.6px;top:536.9px;width:97px"><span>413</span></div>
<div class="dc" style="left:866.6px;top:536.9px;width:89px"><span>Completed</span></div>
<div class="dc" style="left:955.6px;top:536.9px;width:75px"><span>3</span></div>
<div class="dc" style="left:1030.6px;top:536.9px;width:94px"><span>Feb</span></div>
<div class="dc" style="left:1124.6px;top:536.9px;width:176px"><span>2024</span></div>
<div class="dc" style="left:38.6px;top:554.6px;width:75px"><span>EVT0058</span></div>
<div class="dc" style="left:113.6px;top:554.6px;width:84px"><span>20-Jun-24</span></div>
<div class="dc" style="left:197.6px;top:554.6px;width:132px"><span>Team Building</span></div>
<div class="dc" style="left:329.6px;top:554.6px;width:100px"><span>Marketing</span></div>
<div class="dc" style="left:429.6px;top:554.6px;width:112px"><span>Online</span></div>
<div class="dc" style="left:541.6px;top:554.6px;width:113px"><span>27</span></div>
<div class="dc" style="left:654.6px;top:554.6px;width:115px"><span>7</span></div>
<div class="dc" style="left:769.6px;top:554.6px;width:97px"><span>1420</span></div>
<div class="dc" style="left:866.6px;top:554.6px;width:89px"><span>Completed</span></div>
<div class="dc" style="left:955.6px;top:554.6px;width:75px"><span>1</span></div>
<div class="dc" style="left:1030.6px;top:554.6px;width:94px"><span>Jun</span></div>
<div class="dc" style="left:1124.6px;top:554.6px;width:176px"><span>2024</span></div>
<div class="dc" style="left:38.6px;top:572.3px;width:75px"><span>EVT0061</span></div>
<div class="dc" style="left:113.6px;top:572.3px;width:84px"><span>26-Feb-24</span></div>
<div class="dc" style="left:197.6px;top:572.3px;width:132px"><span>Workshop</span></div>
<div class="dc" style="left:329.6px;top:572.3px;width:100px"><span>Admin Team</span></div>
<div class="dc" style="left:429.6px;top:572.3px;width:112px"><span>Online</span></div>
<div class="dc" style="left:541.6px;top:572.3px;width:113px"><span>192</span></div>
<div class="dc" style="left:654.6px;top:572.3px;width:115px"><span>178</span></div>
<div class="dc" style="left:769.6px;top:572.3px;width:97px"><span>22306</span></div>
<div class="dc" style="left:866.6px;top:572.3px;width:89px"><span>Cancelled</span></div>
<div class="dc" style="left:955.6px;top:572.3px;width:75px"><span>2</span></div>
<div class="dc" style="left:1030.6px;top:572.3px;width:94px"><span>Feb</span></div>
<div class="dc" style="left:1124.6px;top:572.3px;width:176px"><span>2024</span></div>
<div class="dc" style="left:38.6px;top:590.0px;width:75px"><span>EVT0064</span></div>
<div class="dc" style="left:113.6px;top:590.0px;width:84px"><span>31-May-24</span></div>
<div class="dc" style="left:197.6px;top:590.0px;width:132px"><span>Training</span></div>
<div class="dc" style="left:329.6px;top:590.0px;width:100px"><span>Admin Team</span></div>
<div class="dc" style="left:429.6px;top:590.0px;width:112px"><span>Online</span></div>
<div class="dc" style="left:541.6px;top:590.0px;width:113px"><span>64</span></div>
<div class="dc" style="left:654.6px;top:590.0px;width:115px"><span>53</span></div>
<div class="dc" style="left:769.6px;top:590.0px;width:97px"><span>8820</span></div>
<div class="dc" style="left:866.6px;top:590.0px;width:89px"><span>Cancelled</span></div>
<div class="dc" style="left:955.6px;top:590.0px;width:75px"><span>2</span></div>
<div class="dc" style="left:1030.6px;top:590.0px;width:94px"><span>May</span></div>
<div class="dc" style="left:1124.6px;top:590.0px;width:176px"><span>2024</span></div>
<div class="dc" style="left:38.6px;top:607.7px;width:75px"><span>EVT0067</span></div>
<div class="dc" style="left:113.6px;top:607.7px;width:84px"><span>10-Feb-24</span></div>
<div class="dc" style="left:197.6px;top:607.7px;width:132px"><span>Workshop</span></div>
<div class="dc" style="left:329.6px;top:607.7px;width:100px"><span>Leadership</span></div>
<div class="dc" style="left:429.6px;top:607.7px;width:112px"><span>Online</span></div>
<div class="dc" style="left:541.6px;top:607.7px;width:113px"><span>55</span></div>
<div class="dc" style="left:654.6px;top:607.7px;width:115px"><span>54</span></div>
<div class="dc" style="left:769.6px;top:607.7px;width:97px"><span>5149</span></div>
<div class="dc" style="left:866.6px;top:607.7px;width:89px"><span>Completed</span></div>
<div class="dc" style="left:955.6px;top:607.7px;width:75px"><span>5</span></div>
<div class="dc" style="left:1030.6px;top:607.7px;width:94px"><span>Feb</span></div>
<div class="dc" style="left:1124.6px;top:607.7px;width:176px"><span>2024</span></div>
<div class="dc" style="left:38.6px;top:625.4px;width:75px"><span>EVT0070</span></div>
<div class="dc" style="left:113.6px;top:625.4px;width:84px"><span>6-Apr-24</span></div>
<div class="dc" style="left:197.6px;top:625.4px;width:132px"><span>Conference</span></div>
<div class="dc" style="left:329.6px;top:625.4px;width:100px"><span>Marketing</span></div>
<div class="dc" style="left:429.6px;top:625.4px;width:112px"><span>Online</span></div>
<div class="dc" style="left:541.6px;top:625.4px;width:113px"><span>177</span></div>
<div class="dc" style="left:654.6px;top:625.4px;width:115px"><span>165</span></div>
<div class="dc" style="left:769.6px;top:625.4px;width:97px"><span>12250</span></div>
<div class="dc" style="left:866.6px;top:625.4px;width:89px"><span>Completed</span></div>
<div class="dc" style="left:955.6px;top:625.4px;width:75px"><span>2</span></div>
<div class="dc" style="left:1030.6px;top:625.4px;width:94px"><span>Apr</span></div>
<div class="dc" style="left:1124.6px;top:625.4px;width:176px"><span>2024</span></div>
<div class="a" style="left:0;top:638px;width:1280px;height:10px;background:#fff"></div>
<div class="a" style="left:0;top:638px;width:38px;height:10px;background:#f8f9fa"></div>
<div class="a" style="left:40px;top:639px;width:1212px;height:7px;background:#dadce0;border-radius:4px"></div>
</body></html>
